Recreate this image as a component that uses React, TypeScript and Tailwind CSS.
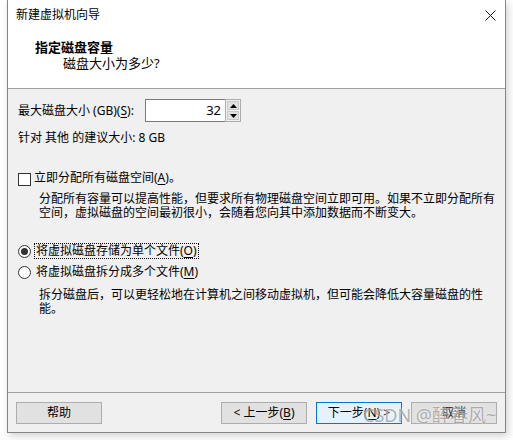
import React from 'react';

const font = "font-['Noto_Sans','Noto_Sans_CJK_SC',sans-serif]";

function U({ children }: { children: React.ReactNode }) {
  return <span className="underline underline-offset-2">{children}</span>;
}

function Button({ label, primary = false }: { label: React.ReactNode; primary?: boolean }) {
  return (
    <div
      className={`w-[86px] h-[22px] flex items-center justify-center text-[12px] leading-none border ${
        primary ? 'bg-[#e5f1fb] border-[#0078d7]' : 'bg-[#e1e1e1] border-[#adadad]'
      }`}
    >
      {label}
    </div>
  );
}

function Radio({ checked }: { checked?: boolean }) {
  return (
    <span className="w-[13px] h-[13px] rounded-full border border-[#333] bg-white flex items-center justify-center shrink-0">
      {checked && <span className="w-[7px] h-[7px] rounded-full bg-[#333]" />}
    </span>
  );
}

export default function App() {
  return (
    <div className={`relative w-[513px] h-[440px] bg-white overflow-hidden text-black ${font}`}>
      {/* window */}
      <div className="ml-[7px] w-[499px] h-[433px] flex flex-col border-x border-b border-[#858585] shadow-[2px_3px_8px_rgba(0,0,0,0.18)] bg-[#f0f0f0]">
        {/* header */}
        <div className="h-[89px] bg-white border-b border-[#a0a0a0] flex flex-col relative">
          <div className="mt-[7px] pl-[8px] text-[12px] leading-[16px]">新建虚拟机向导</div>
          <svg
            className="absolute right-[9px] top-[10px]"
            width="11"
            height="11"
            viewBox="0 0 11 11"
            fill="none"
            stroke="#111"
            strokeWidth="1"
          >
            <path d="M0.5 0.5 L10.5 10.5 M10.5 0.5 L0.5 10.5" />
          </svg>
          <div className="mt-[16px] pl-[27px] text-[13px] leading-[16px] font-bold">指定磁盘容量</div>
          <div className="pl-[55px] text-[13px] leading-[16px]">磁盘大小为多少?</div>
        </div>

        {/* body */}
        <div className="flex-1 flex flex-col pl-[10px] text-[12px]">
          <div className="mt-[10px] flex items-center h-[23px]">
            <span className="w-[127px] leading-[16px]">
              最大磁盘大小 (GB)(<U>S</U>):
            </span>
            <div className="w-[81px] h-[23px] border border-[#7a7a7a] bg-white flex items-center justify-end pr-[4px] text-[13px]">
              32
            </div>
            <div className="w-[16px] h-[23px] -ml-px border border-[#adadad] bg-[#f0f0f0] flex flex-col p-px gap-px">
              <div className="flex-1 bg-[#e1e1e1] border border-[#c9c9c9] flex items-center justify-center">
                <svg width="7" height="4" viewBox="0 0 7 4">
                  <path d="M3.5 0 L7 4 L0 4 Z" fill="#000" />
                </svg>
              </div>
              <div className="flex-1 bg-[#e1e1e1] border border-[#c9c9c9] flex items-center justify-center">
                <svg width="7" height="4" viewBox="0 0 7 4">
                  <path d="M0 0 L7 0 L3.5 4 Z" fill="#000" />
                </svg>
              </div>
            </div>
          </div>

          <div className="mt-[8px] leading-[16px]">针对 其他 的建议大小: 8 GB</div>

          <div className="mt-[24px] flex items-center h-[16px] gap-[3px]">
            <span className="w-[13px] h-[13px] border border-[#333] bg-white shrink-0 mt-[2px]" />
            <span className="leading-[16px]">
              立即分配所有磁盘空间(<U>A</U>)。
            </span>
          </div>
          <div className="mt-[6px] pl-[21px] leading-[14px] whitespace-nowrap">
            分配所有容量可以提高性能，但要求所有物理磁盘空间立即可用。如果不立即分配所有
            <br />
            空间，虚拟磁盘的空间最初很小，会随着您向其中添加数据而不断变大。
          </div>

          <div className="mt-[23px] flex items-center h-[16px] gap-[3px]">
            <Radio checked />
            <span className="leading-[14px] border border-dotted border-black px-px">
              将虚拟磁盘存储为单个文件(<U>O</U>)
            </span>
          </div>
          <div className="mt-[5px] flex items-center h-[16px] gap-[3px]">
            <Radio />
            <span className="leading-[16px] pl-[2px]">
              将虚拟磁盘拆分成多个文件(<U>M</U>)
            </span>
          </div>
          <div className="mt-[8px] pl-[21px] leading-[14px] whitespace-nowrap">
            拆分磁盘后，可以更轻松地在计算机之间移动虚拟机，但可能会降低大容量磁盘的性
            <br />
            能。
          </div>
        </div>

        {/* footer */}
        <div className="border-t border-[#a0a0a0] pt-[9px] pb-[8px] px-[8px] flex items-center">
          <Button label="帮助" />
          <div className="ml-auto flex gap-[9px]">
            <Button label={<>&lt; 上一步(<U>B</U>)</>} />
            <Button label={<>下一步(<U>N</U>) &gt;</>} primary />
            <Button label="取消" />
          </div>
        </div>
      </div>

      {/* watermark over the buttons */}
      <div className="absolute left-[363px] top-[404px] text-[18px] leading-[22px] text-[#7d7d7d]/60 whitespace-nowrap [text-shadow:0_0_2px_rgba(255,255,255,0.9)]">
        CSDN @醉春风~
      </div>
    </div>
  );
}
